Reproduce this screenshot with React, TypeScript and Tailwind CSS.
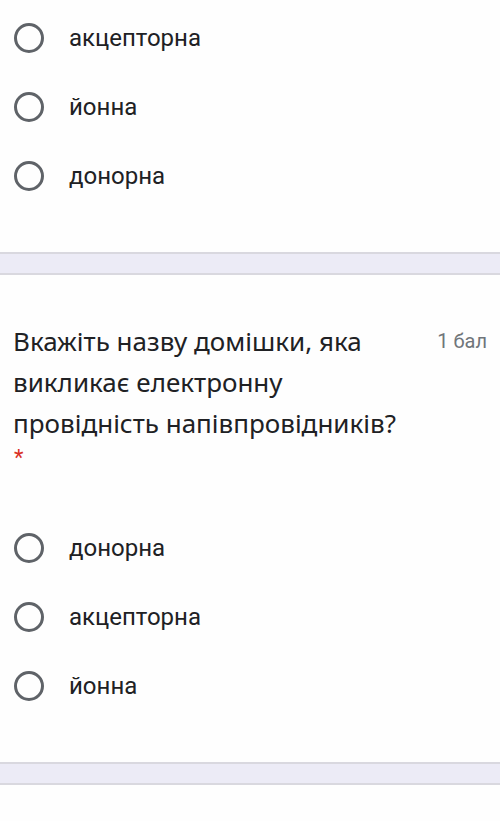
import React from 'react';

const roboto = { fontFamily: 'Roboto, "Liberation Sans", sans-serif' };

const Radio = ({ label }: { label: string }) => (
  <div className="flex items-center h-[69px]">
    <div className="ml-[14px] w-[30px] h-[30px] rounded-full border-[3px] border-[#5f6368] shrink-0" />
    <span className="ml-[25px] text-[24px] text-[#202124]" style={roboto}>
      {label}
    </span>
  </div>
);

const Divider = () => (
  <div className="h-[23px] bg-[#ecebf6] border-y-2 border-[#d9d8df]" />
);

export default function App() {
  return (
    <div className="w-[500px] h-[821px] bg-[#fefefe] overflow-hidden">
      {/* previous question options */}
      <div className="pt-[3px] pb-[42px]">
        <Radio label="акцепторна" />
        <Radio label="йонна" />
        <Radio label="донорна" />
      </div>

      <Divider />

      {/* question card */}
      <div className="pt-[46px] pb-[42px]">
        <div className="flex items-start px-[13px] gap-6">
          <h2
            className="flex-1 text-[26px] leading-[41px] text-[#202124] font-normal"
            style={{ fontFamily: '"Noto Sans", "Open Sans", sans-serif' }}
          >
            Вкажіть назву домішки, яка викликає електронну провідність напівпровідників?
          </h2>
          <span className="shrink-0 text-[20px] leading-[41px] text-[#70757a]" style={roboto}>
            1 бал
          </span>
        </div>
        <div className="px-[14px] h-[26px] flex items-center text-[22px] text-[#d93025]" style={roboto}>
          *
        </div>
        <div className="mt-[43px]">
          <Radio label="донорна" />
          <Radio label="акцепторна" />
          <Radio label="йонна" />
        </div>
      </div>

      <Divider />
    </div>
  );
}
